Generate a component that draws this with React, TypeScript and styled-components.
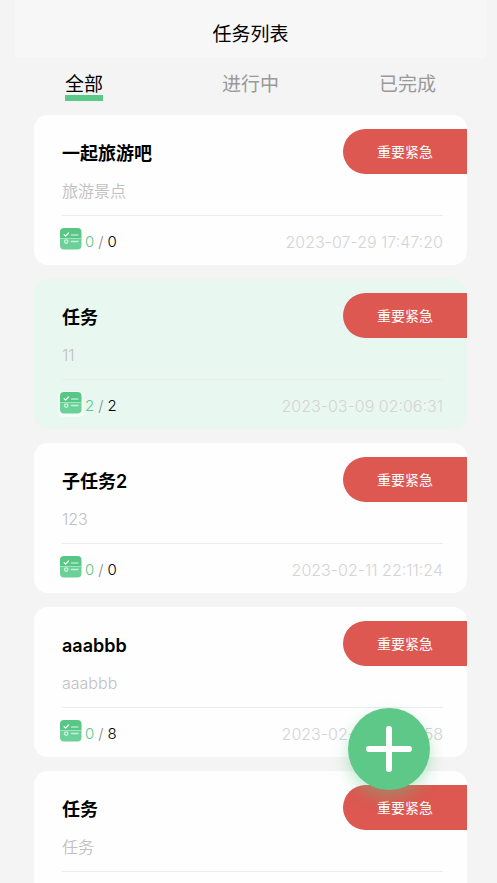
import React, { useState } from "react";
import styled, { createGlobalStyle, css } from "styled-components";

const GlobalStyle = createGlobalStyle`
  * { box-sizing: border-box; }
  body {
    margin: 0;
    background: #f4f4f4;
    color: #000;
    font-family: Inter, "Noto Sans CJK SC", sans-serif;
  }
  button { font: inherit; border: 0; padding: 0; background: none; cursor: pointer; }
`;

const Screen = styled.div`
  height: 100vh;
  overflow-y: auto;
  scrollbar-width: none;
  background: #f4f4f4;
`;

const Header = styled.header`
  display: flex;
  align-items: center;
  justify-content: center;
  height: 58px;
  margin: 0 11px 0 15px;
  padding-top: 12px;
  background: #f7f7f7;
`;

const PageTitle = styled.h1`
  margin: 0;
  font-size: 19px;
  line-height: 28px;
  font-weight: 400;
`;

const Tabs = styled.nav`
  display: grid;
  grid-template-columns: repeat(3, 1fr);
  margin: 0 11px 0 15px;
  padding: 17px 0 14px;
`;

const Tab = styled.button<{ $active: boolean }>`
  justify-self: start;
  margin-left: 50px;
  font-size: 19px;
  line-height: 20px;
  color: ${(p) => (p.$active ? "#000" : "#999")};
  border-bottom: 6px solid ${(p) => (p.$active ? "#5ac987" : "transparent")};
`;

const List = styled.main`
  display: flex;
  flex-direction: column;
  gap: 14px;
  padding: 0 30px 14px 34px;
`;

const Card = styled.article<{ $done: boolean }>`
  min-height: 150px;
  padding-top: 14px;
  border-radius: 14px;
  background: ${(p) => (p.$done ? "#e8f8f0" : "#fefefe")};
`;

const CardHead = styled.div`
  display: flex;
  align-items: center;
  justify-content: space-between;
  padding-left: 28px;
`;

const CardTitle = styled.h2`
  margin: 0;
  padding-top: 5px;
  font-size: 18px;
  line-height: 28px;
  font-weight: 600;
`;

const Priority = styled.span`
  width: 124px;
  border-radius: 23px 0 0 23px;
  background: #dc5850;
  color: #fff;
  font-size: 14px;
  line-height: 45px;
  text-align: center;
`;

const Description = styled.p`
  margin: 5px 24px 0 28px;
  padding-bottom: 12px;
  border-bottom: 1px solid #ececee;
  color: #c0c0c0;
  font-size: 16px;
  font-weight: 350;
  line-height: 24px;
`;

const CardFoot = styled.div`
  display: flex;
  align-items: flex-start;
  padding: 11px 24px 0 24px;
`;

const small = css`
  margin-top: 1px;
  line-height: 28px;
`;

const Progress = styled.span`
  ${small}
  display: flex;
  gap: 4px;
  margin-left: 1px;
  font-size: 15px;
  font-weight: 350;
  color: #000;
`;

const Finished = styled.span`
  color: #5ac987;
`;

const Slash = styled.span`
  color: #888;
`;

const Time = styled.time`
  ${small}
  margin-left: auto;
  color: #d4d4d4;
  font-size: 16px;
  font-weight: 300;
`;

const AddButton = styled.button`
  position: fixed;
  right: 67px;
  bottom: 93px;
  display: grid;
  place-items: center;
  width: 82px;
  height: 82px;
  && {
    border-radius: 50%;
    background: #5dc888;
    box-shadow: 0 7px 16px rgba(93, 200, 136, 0.4);
  }
`;

function ChecklistIcon() {
  return (
    <svg width="26" height="26" viewBox="0 0 26 26" fill="none" aria-hidden="true">
      <rect width="26" height="26" rx="5" fill="#fff" fillOpacity="0.5" />
      <path d="M2 11.5V5a4 4 0 0 1 4-4h13.5a4 4 0 0 1 4 4v6.5z" fill="#58c786" />
      <path d="M2 11.5h21.5v7a4 4 0 0 1-4 4H6a4 4 0 0 1-4-4z" fill="#6bd198" />
      <path d="M2 11.5h21.5" stroke="#a8e4c2" strokeWidth="0.8" />
      <path d="M6 7.6l1.6 1.6 3-3.2" stroke="#fff" strokeWidth="1.1" strokeLinecap="round" strokeLinejoin="round" />
      <path d="M13.500 8h6.500" stroke="#e2f7eb" strokeWidth="1.2" strokeLinecap="round" />
      <circle cx="8.2" cy="14.6" r="1.7" stroke="#c9f0da" strokeWidth="1.4" />
      <path d="M13.5 14.5h6.5" stroke="#c9f0da" strokeWidth="1.3" strokeLinecap="round" />
    </svg>
  );
}

function PlusIcon() {
  return (
    <svg width="46" height="46" viewBox="0 0 46 46" fill="none" aria-hidden="true">
      <path d="M23 3v40M3 23h40" stroke="#fff" strokeWidth="6" strokeLinecap="round" />
    </svg>
  );
}

interface Task {
  title: string;
  description: string;
  done?: number;
  total?: number;
  time?: string;
}

const tasks: Task[] = [
  { title: "一起旅游吧", description: "旅游景点", done: 0, total: 0, time: "2023-07-29 17:47:20" },
  { title: "任务", description: "11", done: 2, total: 2, time: "2023-03-09 02:06:31" },
  { title: "子任务2", description: "123", done: 0, total: 0, time: "2023-02-11 22:11:24" },
  { title: "aaabbb", description: "aaabbb", done: 0, total: 8, time: "2023-02-09 20:31:58" },
  { title: "任务", description: "任务" },
];

const tabs = ["全部", "进行中", "已完成"];

function TaskCard({ task }: { task: Task }) {
  return (
    <Card $done={!!task.total && task.done === task.total}>
      <CardHead>
        <CardTitle>{task.title}</CardTitle>
        <Priority>重要紧急</Priority>
      </CardHead>
      <Description>{task.description}</Description>
      {task.time && (
        <CardFoot>
          <ChecklistIcon />
          <Progress>
            <Finished>{task.done}</Finished>
            <Slash>/</Slash>
            <span>{task.total}</span>
          </Progress>
          <Time>{task.time}</Time>
        </CardFoot>
      )}
    </Card>
  );
}

export default function App() {
  const [active, setActive] = useState(0);
  return (
    <Screen>
      <GlobalStyle />
      <Header>
        <PageTitle>任务列表</PageTitle>
      </Header>
      <Tabs>
        {tabs.map((label, i) => (
          <Tab key={label} $active={i === active} onClick={() => setActive(i)}>
            {label}
          </Tab>
        ))}
      </Tabs>
      <List>
        {tasks.map((task, i) => (
          <TaskCard key={i} task={task} />
        ))}
      </List>
      <AddButton aria-label="添加任务">
        <PlusIcon />
      </AddButton>
    </Screen>
  );
}
